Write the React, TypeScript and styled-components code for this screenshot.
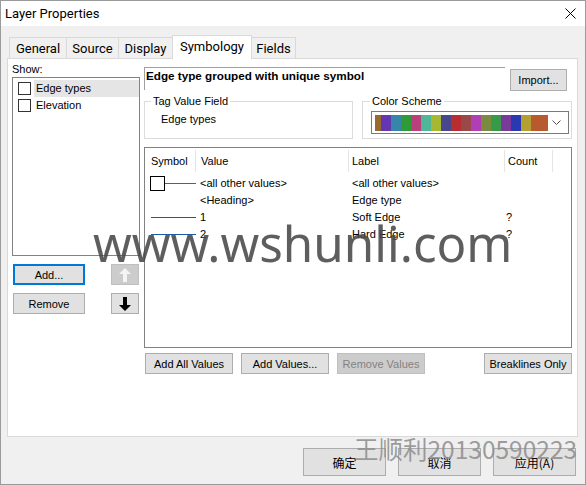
import React from 'react'
import styled, { createGlobalStyle } from 'styled-components'

const UI_FONT = `Roboto, 'Noto Sans', 'Noto Sans CJK SC', sans-serif`
const FORM_FONT = `'Liberation Sans', Arial, 'Noto Sans CJK SC', sans-serif`

const GlobalStyle = createGlobalStyle`
  html, body {
    margin: 0;
    padding: 0;
    background: #ffffff;
  }
  body {
    font-family: ${UI_FONT};
    font-size: 13px;
    color: #000;
  }
  * {
    box-sizing: border-box;
  }
`

const Window = styled.div`
  position: relative;
  width: 586px;
  height: 485px;
  border: 1px solid #9b9b9b;
  background: #f0f0f0;
  display: flex;
  flex-direction: column;
  overflow: hidden;
`

const TitleBar = styled.div`
  height: 25px;
  flex: none;
  background: #ffffff;
  display: flex;
  align-items: center;
  justify-content: space-between;
  padding: 0 9px 0 4px;
  font-size: 13px;
`

const Body = styled.div`
  flex: 1;
  display: flex;
  flex-direction: column;
  padding: 9px 7px 0 6px;
`

const TabRow = styled.div`
  display: flex;
  align-items: flex-end;
  height: 23px;
  padding-left: 2px;
  position: relative;
  z-index: 1;
`

const Tab = styled.div<{ $active?: boolean; $w: number }>`
  width: ${p => p.$w}px;
  height: ${p => (p.$active ? 24 : 21)}px;
  margin-left: -1px;
  margin-bottom: ${p => (p.$active ? -1 : 0)}px;
  padding-bottom: ${p => (p.$active ? 2 : 0)}px;
  display: flex;
  align-items: center;
  justify-content: center;
  border: 1px solid #d9d9d9;
  border-bottom: none;
  background: ${p => (p.$active ? '#ffffff' : '#f0f0f0')};
  white-space: nowrap;
  &:first-child {
    margin-left: 0;
  }
`

const Panel = styled.div`
  height: 379px;
  flex: none;
  background: #ffffff;
  border: 1px solid #d9d9d9;
  display: flex;
  gap: 4px;
  padding: 2px 5px 0 4px;
  font-family: ${FORM_FONT};
  font-size: 11px;
`

const LeftColumn = styled.div`
  width: 128px;
  flex: none;
  display: flex;
  flex-direction: column;
`

const ShowLabel = styled.div`
  height: 16px;
  line-height: 16px;
`

const ListBox = styled.div`
  height: 179px;
  border: 1px solid #828282;
  background: #ffffff;
  padding-top: 2px;
`

const ListItem = styled.div`
  height: 17px;
  display: flex;
  align-items: center;
  padding-left: 5px;
`

const CheckBox = styled.span`
  width: 13px;
  height: 13px;
  flex: none;
  border: 1px solid #333333;
  background: #ffffff;
  margin-right: 3px;
`

const ItemLabel = styled.span<{ $selected?: boolean }>`
  flex: 1;
  height: 17px;
  line-height: 17px;
  padding-left: 2px;
  background: ${p => (p.$selected ? '#e5e5e5' : 'transparent')};
`

const ButtonRow = styled.div`
  display: flex;
  justify-content: space-between;
  padding: 0 1px;
  margin-top: 8px;
`

const Button = styled.button<{ $w: number; $h?: number; $focused?: boolean }>`
  width: ${p => p.$w}px;
  height: ${p => p.$h ?? 21}px;
  flex: none;
  padding: 0;
  font: 11px ${FORM_FONT};
  color: #000;
  background: #e1e1e1;
  border: ${p => (p.$focused ? '2px solid #0078d7' : '1px solid #adadad')};
  display: flex;
  align-items: center;
  justify-content: center;
  white-space: nowrap;
  &:disabled {
    background: #cccccc;
    border-color: #bfbfbf;
    color: #838383;
  }
`

const RightColumn = styled.div`
  flex: 1;
  display: flex;
  flex-direction: column;
  padding-top: 6px;
`

const TopRow = styled.div`
  display: flex;
  align-items: flex-start;
  height: 23px;
`

const DescBox = styled.div`
  width: 361px;
  height: 23px;
  border-top: 1px solid #a0a0a0;
  border-left: 1px solid #a0a0a0;
  padding: 1px 0 0 1px;
  line-height: 14px;
  font-size: 11.7px;
  font-weight: 700;
  white-space: nowrap;
`

const ImportButton = styled(Button)`
  margin-left: 5px;
  margin-top: 2px;
`

const GroupRow = styled.div`
  display: flex;
  gap: 9px;
  margin-top: 4px;
`

const GroupBox = styled.fieldset<{ $padLeft: number }>`
  flex: 1;
  min-width: 0;
  margin: 0;
  border: 1px solid #dcdcdc;
  padding: 0 2px 4px ${p => p.$padLeft}px;
`

const GroupLegend = styled.legend`
  padding: 0 2px;
  margin-left: -1px;
  line-height: 14px;
`

const FieldValue = styled.div`
  height: 23px;
  line-height: 16px;
  padding: 3px 0 0 9px;
`

const Combo = styled.div`
  height: 23px;
  margin-top: 3px;
  border: 1px solid #7a7a7a;
  display: flex;
  align-items: center;
  padding-left: 3px;
`

const ColorStrip = styled.div`
  display: flex;
  height: 16px;
  width: 173px;
`

const Swatch = styled.span<{ $c: string; $w: number }>`
  width: ${p => p.$w}px;
  height: 100%;
  background: ${p => p.$c};
`

const Chevron = styled.svg`
  margin-left: auto;
  margin-right: 7px;
`

const Table = styled.div`
  height: 201px;
  margin-top: 8px;
  border: 1px solid #828282;
  background: #ffffff;
`

const GRID = '51px 153px 156px 48px 1fr'

const HeaderRow = styled.div`
  display: grid;
  grid-template-columns: ${GRID};
  height: 24px;
  margin-bottom: 3px;
`

const HeaderCell = styled.div<{ $pad: number; $sep?: boolean }>`
  padding-left: ${p => p.$pad}px;
  margin-top: 2px;
  line-height: 22px;
  border-right: ${p => (p.$sep ? '1px solid #e5e5e5' : 'none')};
`

const DataRow = styled.div`
  display: grid;
  grid-template-columns: ${GRID};
  height: 17px;
  line-height: 17px;
`

const DataCell = styled.div<{ $pad: number }>`
  padding-left: ${p => p.$pad}px;
  white-space: nowrap;
`

const BottomButtons = styled.div`
  display: flex;
  gap: 8px;
  margin-top: 5px;
  padding-left: 1px;
`

const PushRight = styled(Button)`
  margin-left: auto;
`

const Footer = styled.div`
  display: flex;
  justify-content: flex-end;
  gap: 12px;
  padding: 11px 2px 0 0;
`

const FooterButton = styled(Button)`
  font-family: 'Noto Sans CJK SC', ${UI_FONT};
  font-size: 12px;
`

const SiteMark = styled.div`
  position: absolute;
  left: 92px;
  top: 217px;
  font-family: 'Noto Sans', sans-serif;
  font-size: 49.3px;
  line-height: 1;
  color: rgba(72, 72, 72, 0.88);
  white-space: nowrap;
  pointer-events: none;
`

const NameMark = styled.div`
  position: absolute;
  left: 353px;
  top: 435px;
  font-family: 'Noto Sans CJK SC', sans-serif;
  font-size: 24.5px;
  line-height: 1.1;
  color: rgba(140, 140, 140, 0.85);
  white-space: nowrap;
  pointer-events: none;
`

const swatches: [string, number][] = [
  ['#9a6a2c', 6],
  ['#6436b4', 10],
  ['#3786aa', 10],
  ['#2f9a38', 10],
  ['#b8417c', 10],
  ['#4fb69a', 10],
  ['#a6b832', 10],
  ['#48468c', 10],
  ['#b82e30', 10],
  ['#9a4848', 10],
  ['#b03eb4', 10],
  ['#7a8a3e', 10],
  ['#379a4a', 10],
  ['#7a3a9c', 10],
  ['#2a38b2', 10],
  ['#b2a030', 10],
  ['#b85a30', 17],
]

type Row = {
  sym: 'box' | 'line' | 'none'
  color?: string
  value: string
  label: string
  count: string
}

const rows: Row[] = [
  { sym: 'box', color: '#6a46b8', value: '<all other values>', label: '<all other values>', count: '' },
  { sym: 'none', value: '<Heading>', label: 'Edge type', count: '' },
  { sym: 'line', color: '#c0182c', value: '1', label: 'Soft Edge', count: '?' },
  { sym: 'line', color: '#1c5ea4', value: '2', label: 'Hard Edge', count: '?' },
]

const SymbolIcon: React.FC<{ row: Row }> = ({ row }) => {
  if (row.sym === 'none') return null
  return (
    <svg width="51" height="17" viewBox="0 0 51 17" style={{ display: 'block' }}>
      {row.sym === 'box' ? (
        <>
          <rect x="5.5" y="1.5" width="14" height="14" fill="#fff" stroke="#000" />
          <rect x="20" y="8" width="31" height="1" fill={row.color} />
        </>
      ) : (
        <rect x="6" y="8" width="45" height="1" fill={row.color} />
      )}
    </svg>
  )
}

const ArrowIcon: React.FC<{ up?: boolean; color: string }> = ({ up, color }) => (
  <svg width="12" height="14" viewBox="0 0 12 14">
    <path
      d={up ? 'M6 0 L12 6 L8 6 L8 14 L4 14 L4 6 L0 6 Z' : 'M6 14 L12 8 L8 8 L8 0 L4 0 L4 8 L0 8 Z'}
      fill={color}
    />
  </svg>
)

const tabs: [string, number][] = [
  ['General', 58],
  ['Source', 53],
  ['Display', 55],
  ['Symbology', 80],
  ['Fields', 45],
]

export default function App() {
  return (
    <>
      <GlobalStyle />
      <Window>
        <TitleBar>
          <span>Layer Properties</span>
          <svg width="11" height="11" viewBox="0 0 11 11">
            <path d="M0.5 0.5 L10.5 10.5 M10.5 0.5 L0.5 10.5" stroke="#000" strokeWidth="1" />
          </svg>
        </TitleBar>
        <Body>
          <TabRow>
            {tabs.map(([t, w]) => (
              <Tab key={t} $w={w} $active={t === 'Symbology'}>
                {t}
              </Tab>
            ))}
          </TabRow>
          <Panel>
            <LeftColumn>
              <ShowLabel>Show:</ShowLabel>
              <ListBox>
                <ListItem>
                  <CheckBox />
                  <ItemLabel $selected>Edge types</ItemLabel>
                </ListItem>
                <ListItem>
                  <CheckBox />
                  <ItemLabel>Elevation</ItemLabel>
                </ListItem>
              </ListBox>
              <ButtonRow>
                <Button $w={72} $focused>
                  Add...
                </Button>
                <Button $w={28} disabled>
                  <ArrowIcon up color="#f4f4f4" />
                </Button>
              </ButtonRow>
              <ButtonRow>
                <Button $w={72}>Remove</Button>
                <Button $w={28}>
                  <ArrowIcon color="#000" />
                </Button>
              </ButtonRow>
            </LeftColumn>
            <RightColumn>
              <TopRow>
                <DescBox>Edge type grouped with unique symbol</DescBox>
                <ImportButton $w={57} $h={22}>
                  Import...
                </ImportButton>
              </TopRow>
              <GroupRow>
                <GroupBox $padLeft={7}>
                  <GroupLegend>Tag Value Field</GroupLegend>
                  <FieldValue>Edge types</FieldValue>
                </GroupBox>
                <GroupBox $padLeft={8}>
                  <GroupLegend>Color Scheme</GroupLegend>
                  <Combo>
                    <ColorStrip>
                      {swatches.map(([c, w], i) => (
                        <Swatch key={i} $c={c} $w={w} />
                      ))}
                    </ColorStrip>
                    <Chevron width="9" height="6" viewBox="0 0 9 6">
                      <path d="M0.5 0.5 L4.5 4.5 L8.5 0.5" fill="none" stroke="#555" />
                    </Chevron>
                  </Combo>
                </GroupBox>
              </GroupRow>
              <Table>
                <HeaderRow>
                  <HeaderCell $pad={6} $sep>
                    Symbol
                  </HeaderCell>
                  <HeaderCell $pad={5} $sep>
                    Value
                  </HeaderCell>
                  <HeaderCell $pad={3} $sep>
                    Label
                  </HeaderCell>
                  <HeaderCell $pad={3} $sep>
                    Count
                  </HeaderCell>
                  <HeaderCell $pad={0} />
                </HeaderRow>
                {rows.map((r, i) => (
                  <DataRow key={i}>
                    <DataCell $pad={0}>
                      <SymbolIcon row={r} />
                    </DataCell>
                    <DataCell $pad={4}>{r.value}</DataCell>
                    <DataCell $pad={3}>{r.label}</DataCell>
                    <DataCell $pad={1}>{r.count}</DataCell>
                    <DataCell $pad={0} />
                  </DataRow>
                ))}
              </Table>
              <BottomButtons>
                <Button $w={88}>Add All Values</Button>
                <Button $w={88}>Add Values...</Button>
                <Button $w={88} disabled>
                  Remove Values
                </Button>
                <PushRight $w={88}>Breaklines Only</PushRight>
              </BottomButtons>
            </RightColumn>
          </Panel>
          <Footer>
            <FooterButton $w={83} $h={28}>
              确定
            </FooterButton>
            <FooterButton $w={83} $h={28}>
              取消
            </FooterButton>
            <FooterButton $w={83} $h={28}>
              应用(A)
            </FooterButton>
          </Footer>
        </Body>
        <SiteMark>www.wshunli.com</SiteMark>
        <NameMark>王顺利20130590223</NameMark>
      </Window>
    </>
  )
}
